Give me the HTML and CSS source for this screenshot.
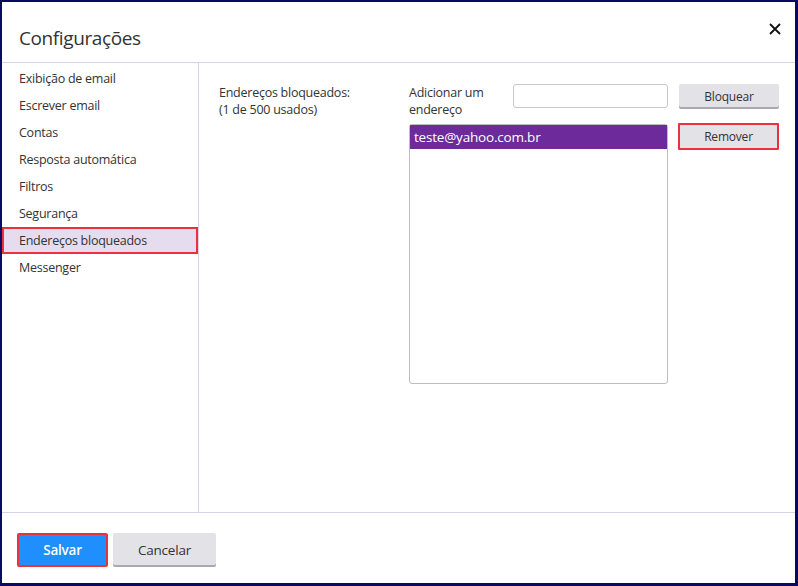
FILE: index.html
```html
<!DOCTYPE html>
<html lang="pt-BR">
<head>
<meta charset="utf-8">
<title>Configurações</title>
<link rel="stylesheet" href="styles.css">
</head>
<body>
<div class="dialog">
  <header class="dlg-header">
    <h1 class="dlg-title">Configurações</h1>
    <button class="close-btn" aria-label="Fechar">
      <svg width="12" height="12" viewBox="0 0 12 12"><path d="M1 1 L11 11 M11 1 L1 11" stroke="#111" stroke-width="1.8" fill="none"/></svg>
    </button>
  </header>
  <div class="dlg-body">
    <nav class="sidebar">
      <div class="nav-item">Exibição de email</div>
      <div class="nav-item">Escrever email</div>
      <div class="nav-item">Contas</div>
      <div class="nav-item">Resposta automática</div>
      <div class="nav-item">Filtros</div>
      <div class="nav-item">Segurança</div>
      <div class="nav-item active">Endereços bloqueados</div>
      <div class="nav-item">Messenger</div>
    </nav>
    <section class="content">
      <div class="label-col">Endereços bloqueados:<br>(1 de 500 usados)</div>
      <div class="main-col">
        <div class="add-row">
          <label class="add-label">Adicionar um endereço</label>
          <input class="add-input" type="text">
        </div>
        <div class="listbox">
          <div class="list-item selected">teste@yahoo.com.br</div>
        </div>
      </div>
      <div class="btn-col">
        <button class="btn btn-grey">Bloquear</button>
        <button class="btn btn-grey btn-marked">Remover</button>
      </div>
    </section>
  </div>
  <footer class="dlg-footer">
    <button class="fbtn fbtn-primary">Salvar</button>
    <button class="fbtn fbtn-grey">Cancelar</button>
  </footer>
</div>
</body>
</html>
```

FILE: styles.css
```css
html, body {
  margin: 0;
  padding: 0;
}
body {
  background: #0a0a62;
  width: 798px;
  height: 586px;
  overflow: hidden;
  font-family: "Open Sans", "Noto Sans", sans-serif;
  color: #2e2e2e;
}
.dialog {
  margin: 2px 3px 3px 2px;
  width: 793px;
  height: 581px;
  background: #fff;
  display: flex;
  flex-direction: column;
}
.dlg-header {
  height: 60px;
  border-bottom: 1px solid #d9d0ea;
  display: flex;
  align-items: flex-start;
  justify-content: space-between;
  flex: none;
}
.dlg-title {
  margin: 24px 0 0 17px;
  font-size: 19px;
  font-weight: 400;
  line-height: 24px;
  letter-spacing: -0.4px;
  color: #333;
}
.close-btn {
  margin: 20px 13px 0 0;
  padding: 0;
  width: 14px;
  height: 14px;
  border: none;
  background: none;
  display: flex;
  align-items: center;
  justify-content: center;
}
.dlg-body {
  flex: 1;
  display: flex;
  border-bottom: 1px solid #d9d0ea;
}
.sidebar {
  width: 196px;
  border-right: 1px solid #d9d0ea;
  padding-top: 2px;
  flex: none;
}
.nav-item {
  height: 27px;
  line-height: 27px;
  padding-left: 17px;
  font-size: 12.5px;
  letter-spacing: -0.25px;
  color: #333;
  box-sizing: border-box;
  width: 196px;
}
.nav-item.active {
  background: #e6dcf0;
  box-shadow: inset 0 0 0 2px #e8333d;
}
.content {
  flex: 1;
  display: flex;
  padding: 21px 0 0 20px;
  font-size: 12.5px;
  letter-spacing: -0.25px;
  line-height: 17px;
  color: #333;
}
.label-col {
  width: 190px;
  flex: none;
}
.main-col {
  width: 259px;
  flex: none;
  display: flex;
  flex-direction: column;
}
.add-row {
  display: flex;
  justify-content: space-between;
  align-items: flex-start;
  height: 40px;
}
.add-label {
  width: 100px;
}
.add-input {
  width: 155px;
  height: 24px;
  box-sizing: border-box;
  border: 1px solid #c8c8c8;
  border-radius: 3px;
  margin: 0;
}
.listbox {
  height: 260px;
  box-sizing: border-box;
  border: 1px solid #bdbdbd;
  border-radius: 3px;
  padding: 0;
}
.list-item {
  height: 24px;
  line-height: 25px;
  padding-left: 4px;
  font-size: 13.5px;
  letter-spacing: -0.2px;
}
.list-item.selected {
  background: #6d2a9b;
  color: #fff;
}
.btn-col {
  margin-left: 11px;
  display: flex;
  flex-direction: column;
  align-items: flex-start;
}
.btn {
  font-family: inherit;
  font-size: 12px;
  letter-spacing: -0.2px;
  color: #333;
  padding: 0;
  cursor: pointer;
}
.btn-grey {
  width: 100px;
  height: 25px;
  background: #e2e2e7;
  border: none;
  border-radius: 2px;
  box-shadow: inset 0 -2px 0 #a9a9b2;
}
.btn-marked {
  margin-top: 14px;
  margin-left: -1px;
  width: 101px;
  height: 27px;
  border: 2px solid #e8333d;
  border-radius: 1px;
  box-shadow: none;
}
.dlg-footer {
  flex: none;
  height: 70px;
  display: flex;
  align-items: flex-start;
  padding: 20px 0 0 15px;
  box-sizing: border-box;
  gap: 5px;
}
.fbtn {
  font-family: inherit;
  font-size: 13.5px;
  letter-spacing: -0.2px;
  height: 34px;
  padding: 0;
  cursor: pointer;
  border-radius: 2px;
}
.fbtn-primary {
  width: 91px;
  background: #1e8ffd;
  color: #fff;
  border: 2px solid #e8333d;
  font-weight: 600;
}
.fbtn-grey {
  width: 103px;
  background: #e2e2e7;
  color: #333;
  border: none;
  box-shadow: inset 0 -2px 0 #a9a9b2;
}
```
